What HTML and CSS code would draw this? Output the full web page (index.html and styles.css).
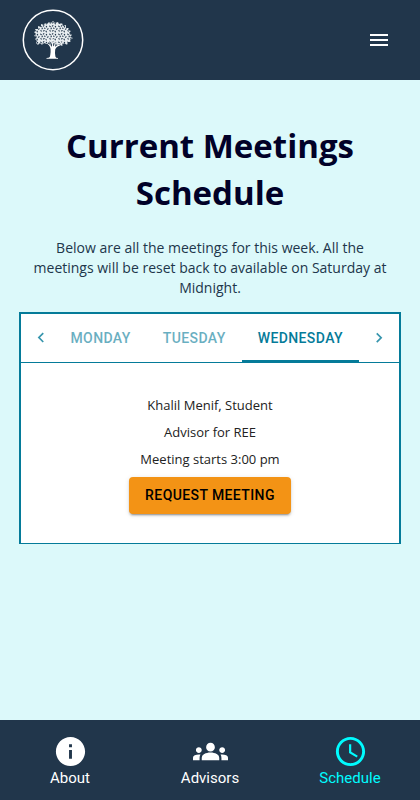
FILE: index.html
```html
<!DOCTYPE html>
<html lang="en">
<head>
<meta charset="utf-8">
<meta name="viewport" content="width=device-width, initial-scale=1">
<title>Current Meetings Schedule</title>
<link rel="stylesheet" href="styles.css">
</head>
<body>
<header class="topbar">
  <a class="logo" href="#" aria-label="Home">
    <svg width="62" height="62" viewBox="0 0 62 62" aria-hidden="true">
      <defs>
        <pattern id="leaves" width="9" height="8" patternUnits="userSpaceOnUse">
          <g fill="#21364b">
            <ellipse cx="1" cy="1.4" rx="1" ry=".6" transform="rotate(35 1 1.4)"/>
            <ellipse cx="3.6" cy=".9" rx=".9" ry=".6" transform="rotate(-40 3.6 .9)"/>
            <ellipse cx="6.5" cy="1.6" rx="1" ry=".6" transform="rotate(60 6.5 1.6)"/>
            <ellipse cx="2.2" cy="3.5" rx="1" ry=".6" transform="rotate(-60 2.2 3.5)"/>
            <ellipse cx="4.8" cy="3.2" rx=".9" ry=".6" transform="rotate(20 4.8 3.2)"/>
            <ellipse cx="7.8" cy="4" rx="1" ry=".6" transform="rotate(-30 7.8 4)"/>
            <ellipse cx="1.1" cy="5.9" rx=".9" ry=".6" transform="rotate(50 1.1 5.9)"/>
            <ellipse cx="3.8" cy="5.8" rx="1" ry=".6" transform="rotate(-20 3.8 5.8)"/>
            <ellipse cx="6.2" cy="6.5" rx="1" ry=".6" transform="rotate(70 6.2 6.5)"/>
          </g>
        </pattern>
        <path id="crown" d="M14 34L15 32 13 30 15 28 12 27 14 25 12 23 14 22 13 20 16 20 16 17 19 18 19 15 22 16 23 14 25 15 27 13 29 14 31 12 33 14 36 13 37 15 40 14 41 17 44 16 44 19 47 19 46 21 49 22 47 24 50 26 48 28 51 29 48 31 49 33 46 33 45 36 42 34 40 37 37 35 35 37 33 34 30 35 27 33 25 35 22 34 20 36 18 34 16 36z"/>
      </defs>
      <circle cx="31" cy="31" r="29.7" fill="none" stroke="#fff" stroke-width="1.5"/>
      <use href="#crown" fill="#e8edf0"/>
      <use href="#crown" fill="url(#leaves)"/>
      <path fill="#fff" d="M21 34q5-.5 7 4 1 2 .6 5-.2 3-.8 5-.8 1-3.3 1v.8h11.5V49q-2.400 0-2.600-1.500-.7-4-.2-7 1-3 4.800-4l3-2-5 1.500-3 1.800 1-4.800-2.600 4.500-1.200-4.500-.4 5q-2-4.500-8.800-4z"/>
      <path fill="none" stroke="#fff" stroke-width=".6" d="M30.500 36V26M32 36l4-8M29 36l-5-7M35 36l6-4"/>
    </svg>
  </a>
  <button class="menu" type="button" aria-label="Menu">
    <svg width="24" height="24" viewBox="0 0 24 24" fill="currentColor" aria-hidden="true"><path d="M3 18h18v-2H3v2zm0-5h18v-2H3v2zm0-7v2h18V6H3z"/></svg>
  </button>
</header>

<main class="content">
  <h1 class="title">Current Meetings Schedule</h1>
  <p class="intro">Below are all the meetings for this week. All the meetings will be reset back to available on Saturday at Midnight.</p>
  <section class="schedule">
    <div class="tabs">
      <button class="scroll" type="button" aria-label="Previous days">
        <svg width="20" height="20" viewBox="0 0 24 24" fill="currentColor" aria-hidden="true"><path d="M15.41 16.09l-4.58-4.59 4.58-4.59L14 5.5l-6 6 6 6z"/></svg>
      </button>
      <div class="tablist" role="tablist">
        <button class="tab" type="button" role="tab" aria-selected="false">Monday</button>
        <button class="tab" type="button" role="tab" aria-selected="false">Tuesday</button>
        <button class="tab" type="button" role="tab" aria-selected="true">Wednesday</button>
      </div>
      <button class="scroll" type="button" aria-label="Next days">
        <svg width="20" height="20" viewBox="0 0 24 24" fill="currentColor" aria-hidden="true"><path d="M8.59 16.34l4.58-4.59-4.58-4.59L10 5.75l6 6-6 6z"/></svg>
      </button>
    </div>
    <div class="panel" role="tabpanel">
      <p class="detail">Khalil Menif, Student</p>
      <p class="detail">Advisor for REE</p>
      <p class="detail">Meeting starts 3:00 pm</p>
      <button class="request" type="button">Request Meeting</button>
    </div>
  </section>
</main>

<nav class="bottomnav">
  <a class="navitem" href="#">
    <svg width="35" height="35" viewBox="0 0 24 24" fill="currentColor" aria-hidden="true"><path d="M12 2C6.48 2 2 6.48 2 12s4.480 10 10 10 10-4.480 10-10S17.520 2 12 2zm1 15h-2v-6h2v6zm0-8h-2V7h2v2z"/></svg>
    About
  </a>
  <a class="navitem" href="#">
    <svg width="35" height="35" viewBox="0 0 24 24" fill="currentColor" aria-hidden="true"><path d="M12 12.750c1.630 0 3.070.39 4.240.9 1.080.48 1.760 1.560 1.760 2.730V18H6v-1.610c0-1.180.68-2.260 1.760-2.730 1.170-.52 2.610-.91 4.240-.91zM4 13c1.100 0 2-.9 2-2s-.9-2-2-2-2 .9-2 2 .9 2 2 2zm1.130 1.100c-.37-.06-.74-.1-1.130-.1-.99 0-1.930.21-2.780.58C.48 14.900 0 15.620 0 16.430V18h4.500v-1.610c0-.83.23-1.610.63-2.290zM20 13c1.100 0 2-.9 2-2s-.9-2-2-2-2 .9-2 2 .9 2 2 2zm4 3.430c0-.81-.48-1.530-1.220-1.850-.85-.37-1.790-.58-2.780-.58-.39 0-.76.04-1.130.1.400.68.63 1.460.63 2.290V18H24v-1.570zM12 6c1.660 0 3 1.340 3 3s-1.340 3-3 3-3-1.340-3-3 1.340-3 3-3z"/></svg>
    Advisors
  </a>
  <a class="navitem current" href="#" aria-current="page">
    <svg width="35" height="35" viewBox="0 0 24 24" fill="currentColor" aria-hidden="true"><path d="M11.990 2C6.470 2 2 6.480 2 12s4.470 10 9.990 10C17.520 22 22 17.520 22 12S17.520 2 11.990 2zM12 20c-4.420 0-8-3.580-8-8s3.580-8 8-8 8 3.580 8 8-3.580 8-8 8zm.5-13H11v6l5.250 3.150.75-1.230-4.500-2.670z"/></svg>
    Schedule
  </a>
</nav>
</body>
</html>
```
FILE: styles.css
```css
* { box-sizing: border-box; }

body {
  margin: 0;
  min-height: 100vh;
  display: flex;
  flex-direction: column;
  background: #dcf9fa;
  font-family: "Segoe UI", "Open Sans", "Noto Sans", sans-serif;
}

button {
  border: 0;
  background: none;
  cursor: pointer;
}

svg { display: block; }

.topbar {
  display: flex;
  align-items: center;
  justify-content: space-between;
  height: 80px;
  padding: 0 21px 0 22px;
  background: #21364b;
}

.menu {
  padding: 8px;
  color: #fff;
}

.content {
  flex: 1;
  padding: 42px 19px 24px;
}

.title {
  margin: 0;
  color: #010128;
  font-size: 33px;
  line-height: 47px;
  text-align: center;
}

.intro {
  margin: 22px 0 14px;
  padding: 0 8px;
  color: #21364b;
  font-size: 14px;
  line-height: 20px;
  text-align: center;
}

.schedule {
  border: 2px solid #057b99;
  border-bottom-width: 1px;
  background: #fff;
}

.tabs {
  display: flex;
  border-bottom: 1px solid #057b99;
}

.scroll {
  flex: none;
  width: 40px;
  display: flex;
  align-items: center;
  justify-content: center;
  padding: 0;
  color: #057b99;
  opacity: 0.8;
}

.tablist {
  flex: 1;
  min-width: 0;
  display: flex;
  justify-content: flex-end;
  overflow: hidden;
}

.tab {
  flex: none;
  height: 48px;
  padding: 2px 16px 0;
  border-bottom: 2px solid transparent;
  color: #057b99;
  font: 500 14px/20px Roboto, sans-serif;
  letter-spacing: 0.02857em;
  text-transform: uppercase;
}

.tab[aria-selected="false"] { opacity: 0.6; }

.tab[aria-selected="true"] { border-bottom-color: #057b99; }

.panel {
  display: flex;
  flex-direction: column;
  align-items: center;
  padding: 29px 16px;
}

.detail {
  margin: 0;
  color: #222;
  font-size: 13px;
  line-height: 27px;
}

.request {
  margin-top: 4px;
  padding: 6px 16px;
  border-radius: 4px;
  background: #f39315;
  box-shadow: 0 3px 1px -2px rgba(0, 0, 0, 0.2), 0 2px 2px 0 rgba(0, 0, 0, 0.14), 0 1px 5px 0 rgba(0, 0, 0, 0.12);
  color: #000;
  font: 500 14px/25px Roboto, sans-serif;
  letter-spacing: 0.02857em;
  text-transform: uppercase;
}

.bottomnav {
  display: flex;
  height: 80px;
  background: #21364b;
}

.navitem {
  flex: 1;
  display: flex;
  flex-direction: column;
  align-items: center;
  padding-top: 14px;
  color: #fff;
  font: 15px/18px Roboto, sans-serif;
  text-decoration: none;
}

.current { color: #00fcff; }
```
